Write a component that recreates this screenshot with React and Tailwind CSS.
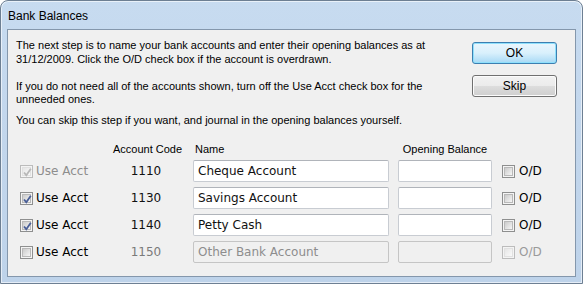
import React from 'react';

const rows = [
    { code: '1110', name: 'Cheque Account', use: true, lockUse: true, enabled: true },
    { code: '1130', name: 'Savings Account', use: true, enabled: true },
    { code: '1140', name: 'Petty Cash', use: true, enabled: true },
    { code: '1150', name: 'Other Bank Account', use: false, enabled: false },
];

// Win7 style check box, 13x13
const CheckBox = ({ checked, disabled }) => (
    <span
        className={`relative flex h-[13px] w-[13px] shrink-0 items-center justify-center border ${
            disabled ? 'border-[#bcbcbc] bg-[#f4f4f4]' : 'border-[#8e8f8f] bg-[#f4f4f4]'
        }`}
    >
        <span
            className={`h-[9px] w-[9px] border ${
                disabled
                    ? 'border-[#e1e1e1] bg-gradient-to-br from-[#e6e6e6] to-[#fafafa]'
                    : 'border-[#b9b9b9] bg-gradient-to-br from-[#cbcbcb] to-[#f6f6f6]'
            }`}
        />
        {checked && (
            <svg className="absolute left-[1px] top-[1px]" width="11" height="11" viewBox="0 0 11 11">
                <path
                    d="M2 5.5 L4.3 8.2 L8.8 1.8"
                    fill="none"
                    stroke={disabled ? '#b8b8b8' : '#4a5f97'}
                    strokeWidth="1.8"
                />
            </svg>
        )}
    </span>
);

const Field = ({ value, disabled, className }) => (
    <div
        className={`flex h-[22px] items-center rounded-[2px] border pl-[4px] text-[12px] ${
            disabled ? 'border-[#c5c5c5] bg-[#f0f0f0] text-[#8d8d8d]' : 'border-[#c8ccd2] border-t-[#b0b4ba] bg-white text-[#111]'
        } ${className}`}
    >
        {value}
    </div>
);

export default function App() {
    return (
        <div className="h-[284px] w-[583px] bg-white">
            <div className="flex h-[284px] w-[583px] flex-col rounded-t-[8px] border border-[#6d7f93] bg-gradient-to-b from-[#c7dbf0] via-[#c2d6ec] to-[#bed3ea] px-[6px] pb-[6px] shadow-[inset_0_0_0_1px_rgba(255,255,255,0.6)]">
                <div
                    className="flex h-[28px] items-center pl-[1px] pt-[1px] text-[12px] text-black"
                    style={{ fontFamily: '"Liberation Sans", Arial, sans-serif' }}
                >
                    Bank Balances
                </div>
                <div
                    className="flex flex-1 flex-col border border-[#8497ac] bg-[#f0f0f0]"
                    style={{ fontFamily: '"Liberation Sans", Arial, sans-serif' }}
                >
                    <div className="flex justify-between pl-[8px] pr-[18px] pt-[8px]">
                        <div className="w-[420px] text-[11px] leading-[14px] text-black">
                            <p>
                                The next step is to name your bank accounts and enter their opening balances as at
                                31/12/2009. Click the O/D check box if the account is overdrawn.
                            </p>
                            <p className="mt-[14px] leading-[13px]">
                                If you do not need all of the accounts shown, turn off the Use Acct check box for the
                                unneeded ones.
                            </p>
                            <p className="mt-[7px]">
                                You can skip this step if you want, and journal in the opening balances yourself.
                            </p>
                        </div>
                        <div className="flex flex-col gap-[11px] pt-[4px]">
                            <button className="flex h-[22px] w-[85px] items-center justify-center rounded-[3px] border border-[#3c7fb1] bg-gradient-to-b from-[#eaf6fd] via-[#d9f0fc] to-[#a7d9f5] text-[12px] text-black shadow-[inset_0_0_0_1px_#8fe0fc]">
                                OK
                            </button>
                            <button className="flex h-[22px] w-[85px] items-center justify-center rounded-[3px] border border-[#707070] bg-[linear-gradient(#f2f2f2,#ebebeb_50%,#dddddd_50%,#cfcfcf)] text-[12px] text-black shadow-[inset_0_0_0_1px_#fcfcfc]">
                                Skip
                            </button>
                        </div>
                    </div>

                    <div className="mt-[15px] pl-[12px] text-[12px]" style={{ fontFamily: '"DejaVu Sans", Verdana, sans-serif' }}>
                        <div
                            className="flex h-[14px] items-center whitespace-nowrap text-[11px] text-black"
                            style={{ fontFamily: '"Liberation Sans", Arial, sans-serif' }}
                        >
                            <span className="w-[93px]" />
                            <span className="w-[66px] text-center">Account Code</span>
                            <span className="ml-[14px] w-[196px] pl-[2px]">Name</span>
                            <span className="ml-[9px] w-[94px] text-center">Opening Balance</span>
                        </div>
                        <div className="mt-[4px] flex flex-col gap-[5px]">
                            {rows.map((r) => (
                                <div key={r.code} className="flex h-[22px] items-center">
                                    <div className="flex w-[93px] items-center gap-[3px]">
                                        <CheckBox checked={r.use} disabled={r.lockUse} />
                                        <span className={r.lockUse ? 'text-[#8d8d8d]' : 'text-black'}>Use Acct</span>
                                    </div>
                                    <span
                                        className={`w-[66px] text-center ${r.enabled ? 'text-[#111]' : 'text-[#7a7a7a]'}`}
                                    >
                                        {r.code}
                                    </span>
                                    <Field value={r.name} disabled={!r.enabled} className="ml-[14px] w-[196px]" />
                                    <Field value="" disabled={!r.enabled} className="ml-[9px] w-[94px]" />
                                    <div className="ml-[10px] flex items-center gap-[4px]">
                                        <CheckBox checked={false} disabled={!r.enabled} />
                                        <span className={r.enabled ? 'text-black' : 'text-[#9a9a9a]'}>O/D</span>
                                    </div>
                                </div>
                            ))}
                        </div>
                    </div>
                </div>
            </div>
        </div>
    );
}
